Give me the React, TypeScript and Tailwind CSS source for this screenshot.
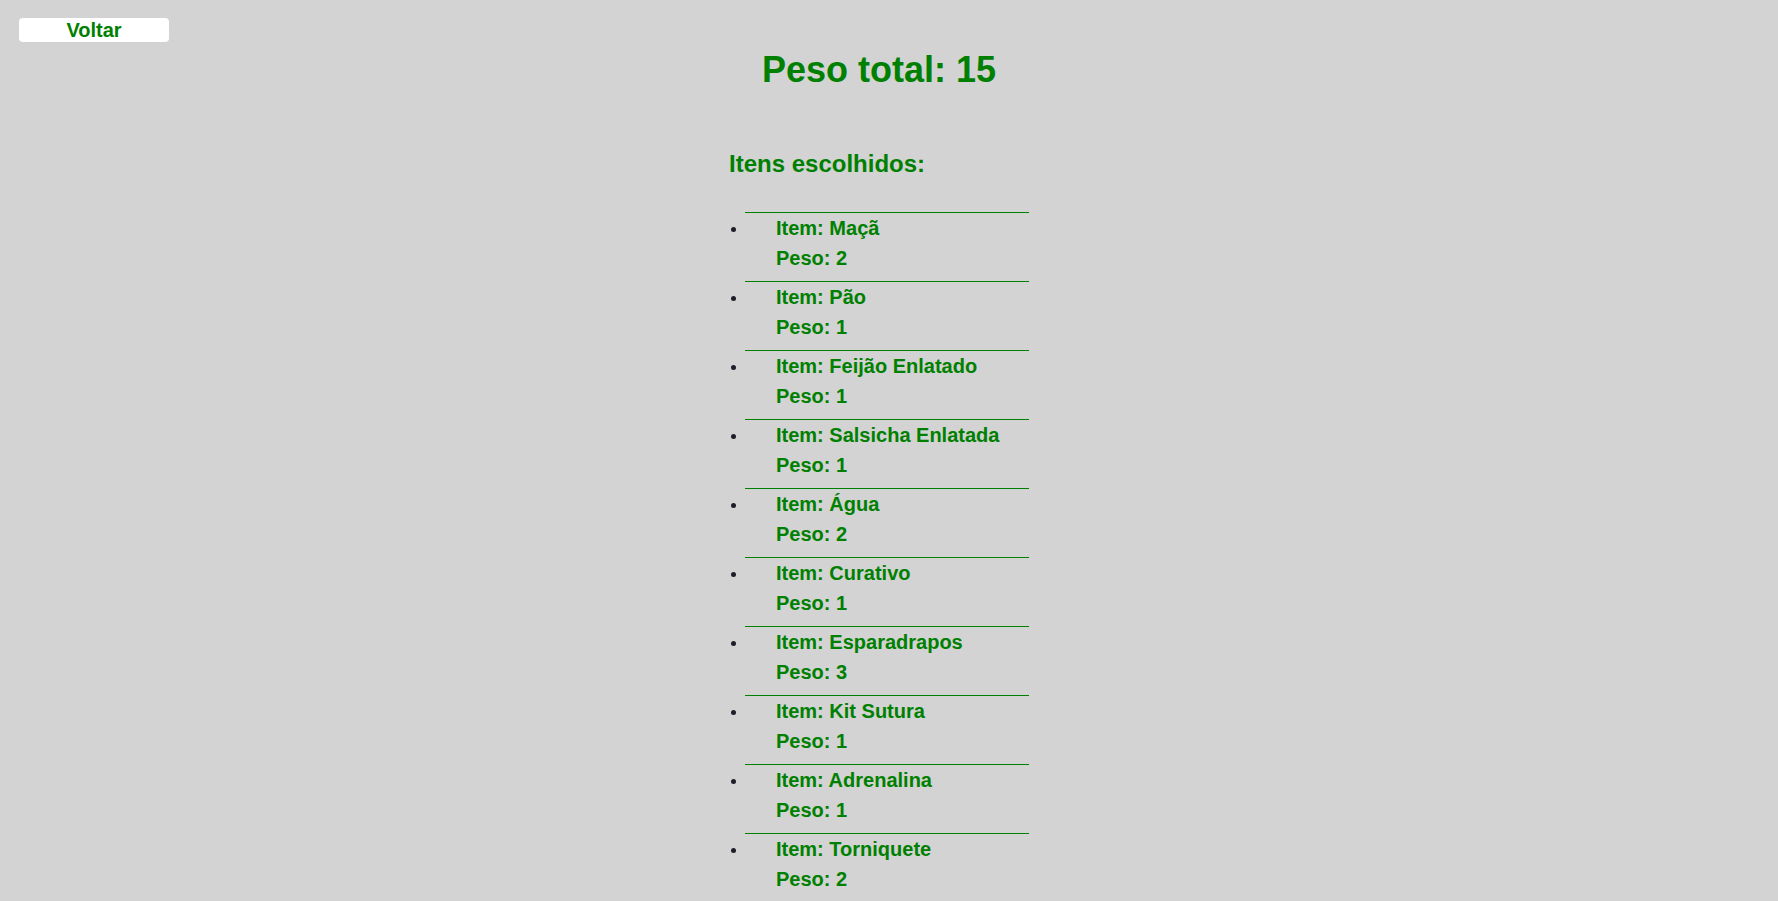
import React from 'react';

const itens = [
  { nome: 'Maçã', peso: 2 },
  { nome: 'Pão', peso: 1 },
  { nome: 'Feijão Enlatado', peso: 1 },
  { nome: 'Salsicha Enlatada', peso: 1 },
  { nome: 'Água', peso: 2 },
  { nome: 'Curativo', peso: 1 },
  { nome: 'Esparadrapos', peso: 3 },
  { nome: 'Kit Sutura', peso: 1 },
  { nome: 'Adrenalina', peso: 1 },
  { nome: 'Torniquete', peso: 2 },
];

// Linha da lista com marcador
const ItemLinha = ({ nome, peso }: { nome: string; peso: number }) => (
  <li className="flex group">
    <div className="w-4 shrink-0">
      <div className="ml-[2px] mt-[15px] w-[5px] h-[5px] rounded-full bg-[#1e1e2a]" />
    </div>
    <div className="w-[284px] border-t border-[#008000] pl-[31px] pb-2 group-last:pb-0">
      <div className="text-[20px] leading-[30px] font-bold text-[#008000]">Item: {nome}</div>
      <div className="text-[20px] leading-[30px] font-bold text-[#008000]">Peso: {peso}</div>
    </div>
  </li>
);

export default function App() {
  const total = itens.reduce((soma, i) => soma + i.peso, 0);

  return (
    <div className="min-h-screen bg-[#d3d3d3] pt-[18px] font-['Liberation_Sans',Arial,sans-serif]">
      <div className="pl-[19px]">
        <button className="w-[150px] h-[24px] bg-white rounded-[4px] text-[20px] leading-[24px] font-bold text-[#008000]">
          Voltar
        </button>
      </div>

      <div className="pr-5">
        <h1 className="mt-[5px] text-center text-[36px] leading-[42px] font-bold text-[#008000]">
          Peso total: {total}
        </h1>

        <div className="w-[300px] mx-auto mt-[59px]">
          <h2 className="text-[24px] leading-[28px] font-bold text-[#008000]">Itens escolhidos:</h2>
          <ul className="mt-[34px]">
            {itens.map((item) => (
              <ItemLinha key={item.nome} nome={item.nome} peso={item.peso} />
            ))}
          </ul>
        </div>
      </div>
    </div>
  );
}
